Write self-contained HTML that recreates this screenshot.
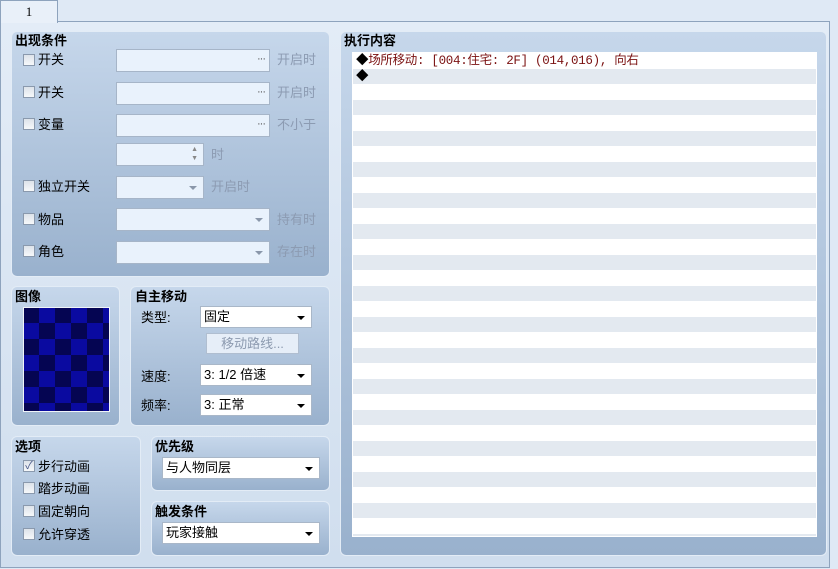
<!DOCTYPE html><html><head><meta charset="utf-8"><style>
*{box-sizing:border-box;margin:0;padding:0}
body{width:838px;height:569px;overflow:hidden;background:#dfe9f5;font-family:"Liberation Sans","Noto Sans CJK SC",sans-serif;font-size:13px;color:#000;position:relative}
.a{position:absolute}
.frame{left:0;top:21px;width:830px;height:547px;border:1px solid #8ea3bd;background:linear-gradient(#e3ecf7,#d0deee)}
.tab{left:0;top:0;width:58px;height:23px;background:#e9f0f9;border:1px solid #8ea3bd;border-bottom:none;text-align:center;font-family:"Liberation Serif",serif;font-size:13px;line-height:22px}
.p{border-radius:6px;background:linear-gradient(#c6d7eb,#99b1cd);border:1px solid #e3ecf6}
.t{font-weight:bold;font-size:13px;line-height:15px}
.cb{width:12px;height:12px;border:1px solid #8a99ad;background:linear-gradient(#dde3ea,#f6f8fa)}
.in{background:#e9f2fc;border:1px solid #a6b5c8;height:23px}
.g{color:#8c9bb2;font-size:13px}
.cmb{background:#fff;border:1px solid #a9b7c8;height:22px;line-height:20px;padding-left:3px;font-size:13px}
.arr{position:absolute;right:6px;top:9px;width:0;height:0;border-left:4px solid transparent;border-right:4px solid transparent;border-top:4px solid #000}
.garr{border-top-color:#8a97aa}
.dots{position:absolute;right:4px;top:3px;font-size:11px;color:#555;letter-spacing:-1px}
</style></head><body>
<div class="a frame"></div>
<div class="a tab">1</div>

<div class="a p" style="left:11px;top:31px;width:319px;height:246px"></div>
<div class="a t" style="left:15px;top:33px">出现条件</div>

<div class="a cb" style="left:23px;top:54px"></div><div class="a" style="left:38px;top:49px">开关</div>
<div class="a in" style="left:116px;top:49px;width:154px"><span class="dots">···</span></div><div class="a g" style="left:277px;top:49px">开启时</div>
<div class="a cb" style="left:23px;top:86px"></div><div class="a" style="left:38px;top:82px">开关</div>
<div class="a in" style="left:116px;top:82px;width:154px"><span class="dots">···</span></div><div class="a g" style="left:277px;top:82px">开启时</div>
<div class="a cb" style="left:23px;top:118px"></div><div class="a" style="left:38px;top:114px">变量</div>
<div class="a in" style="left:116px;top:114px;width:154px"><span class="dots">···</span></div><div class="a g" style="left:277px;top:114px">不小于</div>
<div class="a in" style="left:116px;top:143px;width:88px"><span class="a" style="right:5px;top:2px;font-size:7px;color:#888">▲</span><span class="a" style="right:5px;top:11px;font-size:7px;color:#888">▼</span></div><div class="a g" style="left:211px;top:144px">时</div>
<div class="a cb" style="left:23px;top:180px"></div><div class="a" style="left:38px;top:176px">独立开关</div>
<div class="a in" style="left:116px;top:176px;width:88px"><span class="arr garr"></span></div><div class="a g" style="left:211px;top:176px">开启时</div>
<div class="a cb" style="left:23px;top:213px"></div><div class="a" style="left:38px;top:209px">物品</div>
<div class="a in" style="left:116px;top:208px;width:154px"><span class="arr garr"></span></div><div class="a g" style="left:277px;top:209px">持有时</div>
<div class="a cb" style="left:23px;top:245px"></div><div class="a" style="left:38px;top:241px">角色</div>
<div class="a in" style="left:116px;top:241px;width:154px"><span class="arr garr"></span></div><div class="a g" style="left:277px;top:241px">存在时</div>

<div class="a p" style="left:11px;top:286px;width:109px;height:140px"></div>
<div class="a t" style="left:15px;top:289px">图像</div>
<div class="a" style="left:23px;top:307px;width:87px;height:105px;border:1px solid #f0f4f8;background-color:#060660;background-image:repeating-conic-gradient(#0a0aa0 0 25%,#050552 0 50%);background-size:32px 32px;background-position:-1px -1px"></div>

<div class="a p" style="left:130px;top:286px;width:200px;height:140px"></div>
<div class="a t" style="left:135px;top:289px">自主移动</div>
<div class="a" style="left:141px;top:307px">类型:</div>
<div class="a cmb" style="left:200px;top:306px;width:112px">固定<span class="arr"></span></div>
<div class="a" style="left:206px;top:333px;width:93px;height:21px;background:#e6eef8;border:1px solid #b0bed0;color:#8d9bb0;text-align:center;line-height:19px">移动路线...</div>
<div class="a" style="left:141px;top:366px">速度:</div>
<div class="a cmb" style="left:200px;top:364px;width:112px">3: 1/2 倍速<span class="arr"></span></div>
<div class="a" style="left:141px;top:395px">频率:</div>
<div class="a cmb" style="left:200px;top:394px;width:112px">3: 正常<span class="arr"></span></div>

<div class="a p" style="left:11px;top:436px;width:130px;height:120px"></div>
<div class="a t" style="left:15px;top:439px">选项</div>
<div class="a cb" style="left:23px;top:460px;font-size:11px;line-height:10px;color:#4a5a8a;text-align:center">✓</div><div class="a" style="left:38px;top:456px">步行动画</div>
<div class="a cb" style="left:23px;top:482px"></div><div class="a" style="left:38px;top:478px">踏步动画</div>
<div class="a cb" style="left:23px;top:505px"></div><div class="a" style="left:38px;top:501px">固定朝向</div>
<div class="a cb" style="left:23px;top:528px"></div><div class="a" style="left:38px;top:524px">允许穿透</div>

<div class="a p" style="left:151px;top:436px;width:179px;height:55px"></div>
<div class="a t" style="left:155px;top:439px">优先级</div>
<div class="a cmb" style="left:162px;top:457px;width:158px">与人物同层<span class="arr"></span></div>
<div class="a p" style="left:151px;top:501px;width:179px;height:55px"></div>
<div class="a t" style="left:155px;top:504px">触发条件</div>
<div class="a cmb" style="left:162px;top:522px;width:158px">玩家接触<span class="arr"></span></div>

<div class="a p" style="left:340px;top:31px;width:487px;height:525px"></div>
<div class="a t" style="left:344px;top:33px">执行内容</div>
<div class="a" style="left:352px;top:52px;width:465px;height:485px;border:1px solid #fff;background:repeating-linear-gradient(#fff 0 16px,#e3e9f0 16px 31px);background-position:0 0"></div>
<div class="a" style="left:356px;top:53px;font-size:12.5px;line-height:16px;color:#7a1010;font-family:'Liberation Mono','Noto Sans CJK SC',monospace;letter-spacing:-0.3px"><span style="color:#000">◆</span>场所移动: [004:住宅: 2F] (014,016), 向右</div>
<div class="a" style="left:356px;top:68px;font-size:12.5px;line-height:16px">◆</div>
</body></html>
